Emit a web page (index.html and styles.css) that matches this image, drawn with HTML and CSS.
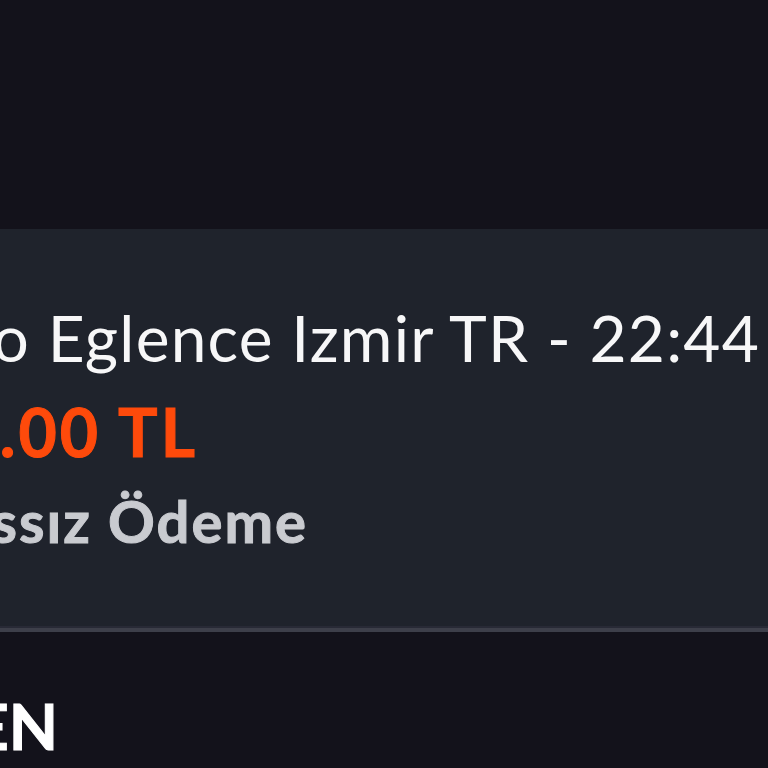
FILE: index.html
```html
<!DOCTYPE html>
<html lang="tr">
<head>
<meta charset="utf-8">
<title>Ödeme</title>
<link rel="stylesheet" href="styles.css">
</head>
<body>
<div class="page">
  <div class="top"></div>
  <section class="card">
    <div class="line l1"><span>Bingo Eglence Izmir TR - 22:44</span></div>
    <div class="line l2"><span>150.00 TL</span></div>
    <div class="line l3"><span>Temassız Ödeme</span></div>
  </section>
  <div class="bottom">
    <div class="line l4"><span>GÖNDEREN</span></div>
  </div>
</div>
</body>
</html>
```
FILE: styles.css
```css
html, body {
  margin: 0;
  padding: 0;
  background: #13121b;
}
.page {
  width: 768px;
  height: 768px;
  overflow: hidden;
  font-family: Lato, "Noto Sans", sans-serif;
}
.top {
  height: 229px;
  background: #13121b;
}
.card {
  background: #1f232c;
  padding: 62px 0 65px 0;
  border-bottom: 4px solid #3d3f4a;
  box-shadow: inset 0 -2px 0 #282a36;
}
.line {
  display: flex;
  justify-content: flex-end;
  white-space: nowrap;
}
.l1 {
  width: 760px;
  font-size: 64px;
  line-height: 94px;
  font-weight: 400;
  letter-spacing: 1.2px;
  color: #f7f7f8;
}
.l2 {
  width: 198px;
  font-size: 66px;
  line-height: 93px;
  font-weight: 700;
  letter-spacing: 3px;
  color: #fe4a0b;
  -webkit-text-stroke: 1px #fe4a0b;
}
.l3 {
  width: 308px;
  font-size: 58px;
  line-height: 85px;
  font-weight: 700;
  letter-spacing: 2px;
  color: #c9cbd0;
  -webkit-text-stroke: 1px #c9cbd0;
}
.bottom {
  padding-top: 47px;
}
.l4 {
  width: 58px;
  font-size: 64px;
  line-height: 94px;
  font-weight: 700;
  color: #ffffff;
  -webkit-text-stroke: 1px #ffffff;
}
```
